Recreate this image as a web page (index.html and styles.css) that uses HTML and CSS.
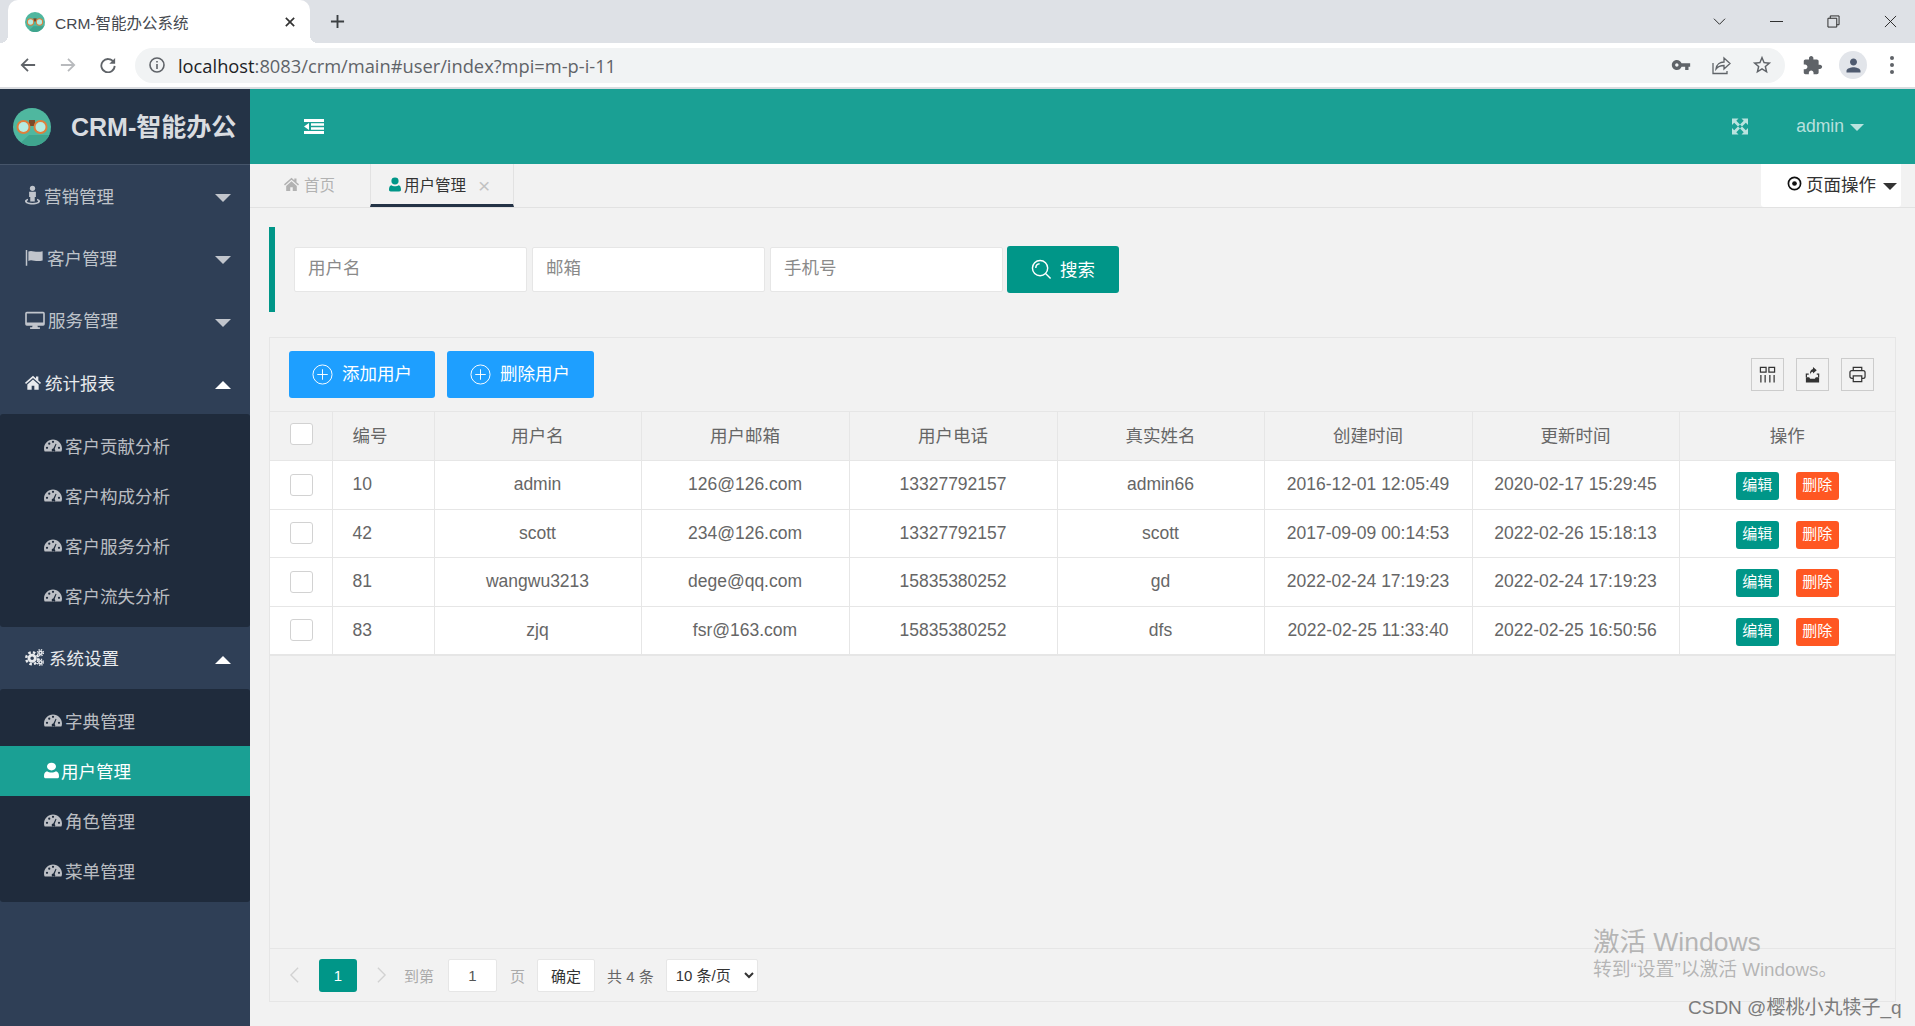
FILE: index.html
```html
<!DOCTYPE html>
<html lang="en">

<head>
    <meta charset="UTF-8">
    <meta name="viewport" content="width=device-width, initial-scale=1">
    <title>CRM-智能办公系统</title>
    <link rel="stylesheet" href="styles.css">
</head>

<body>
    <!-- icon set -->
    <svg class="icon-defs" xmlns="http://www.w3.org/2000/svg">
        <symbol id="i-logo" viewBox="0 0 38 38">
            <ellipse cx="19" cy="19" rx="19" ry="19" fill="#4fb79f"/>
            <path d="M38 19a19 19 0 0 1-30 15.500L16 27h20z" fill="#3fa58e"/>
            <rect x="16" y="12" width="6" height="6" fill="#7a4a2a"/>
            <circle cx="10.500" cy="19" r="7" fill="#e07f3c"/>
            <circle cx="27.500" cy="19" r="7" fill="#e07f3c"/>
            <circle cx="10.500" cy="19" r="5" fill="#b5ece2"/>
            <circle cx="27.500" cy="19" r="5" fill="#b5ece2"/>
        </symbol>
        <symbol id="i-dash" viewBox="0 0 24 18">
            <path fill-rule="evenodd" d="M12 1C5.400 1 0 6.400 0 13c0 1.500.3 3 .9 4h22.200c.6-1 .9-2.500.9-4C24 6.400 18.600 1 12 1zM4 10.500a1.500 1.500 0 1 1 0 3 1.500 1.500 0 0 1 0-3zM7 5a1.500 1.500 0 1 1 0 3 1.500 1.500 0 0 1 0-3zM12 2.500a1.500 1.500 0 1 1 0 3 1.500 1.500 0 0 1 0-3zM20 10.500a1.500 1.500 0 1 1 0 3 1.500 1.500 0 0 1 0-3zM15.500 6.500l1.200.5-2.500 6.500a2.300 2.300 0 1 1-1.800-.6z"/>
        </symbol>
        <symbol id="i-home" viewBox="0 0 24 22">
            <path d="M12 1L0 11.500l1.500 1.800L12 4.200l10.500 9.100 1.500-1.800-4-3.500V2h-3.500v3z"/>
            <path d="M12 6.500L3.500 14v8H10v-6h4v6h6.500v-8z"/>
        </symbol>
        <symbol id="i-user" viewBox="0 0 20 26" preserveAspectRatio="none">
            <path d="M10 1a6 6 0 1 1 0 12 6 6 0 0 1 0-12zM3 25c-2 0-3-1.200-3-3 0-4 1-7 4-7.800 1.500 1.300 3.700 2 6 2s4.500-.7 6-2c3 .8 4 3.800 4 7.800 0 1.800-1 3-3 3z"/>
        </symbol>
        <symbol id="i-street" viewBox="0 0 20 26">
            <circle cx="10" cy="4" r="3.500"/>
            <path d="M5.500 8.500h9v7H13v6H7v-6H5.500z"/>
            <path d="M4 18v2c-1 .4-1.500.8-1.500 1.300C2.500 22.500 6 23.500 10 23.500s7.500-1 7.500-2.200c0-.5-.5-.9-1.500-1.300v-2c2.500.6 4 1.700 4 3.200 0 2.600-4.500 4.300-10 4.300S0 23.800 0 21.200c0-1.500 1.500-2.600 4-3.200z"/>
        </symbol>
        <symbol id="i-flag" viewBox="0 0 24 22">
            <path d="M1 1h2v21H1z"/>
            <path d="M4.500 3c5-2.500 9 2 19-.5V15c-9 2.500-14-2-19 .5z"/>
        </symbol>
        <symbol id="i-desktop" viewBox="0 0 24 22">
            <path fill-rule="evenodd" d="M2 1h20a2 2 0 0 1 2 2v13a2 2 0 0 1-2 2h-7l.5 2H18v2H6v-2h2.500L9 18H2a2 2 0 0 1-2-2V3a2 2 0 0 1 2-2zM2 3v11h20V3z"/>
        </symbol>
        <symbol id="i-cogs" viewBox="0 0 24 24">
            <g fill="none" stroke="currentColor">
                <circle cx="9" cy="13" r="4" stroke-width="3.500"/>
                <circle cx="9" cy="13" r="7.500" stroke-width="3" stroke-dasharray="3.200 2.700"/>
                <circle cx="19.500" cy="6" r="2" stroke-width="2"/>
                <circle cx="19.500" cy="6" r="3.800" stroke-width="1.800" stroke-dasharray="1.600 1.400"/>
                <circle cx="19.500" cy="18" r="2" stroke-width="2"/>
                <circle cx="19.500" cy="18" r="3.800" stroke-width="1.800" stroke-dasharray="1.600 1.400"/>
            </g>
        </symbol>
    </svg>

    <!-- browser window -->
    <div class="tabstrip">
        <div class="browser-tab">
            <svg class="favicon"><use href="#i-logo"/></svg>
            <span class="browser-tab-title">CRM-智能办公系统</span>
            <svg class="browser-tab-close" viewBox="0 0 12 12"><path d="M1 1l10 10M11 1L1 11"/></svg>
        </div>
        <svg class="new-tab" viewBox="0 0 16 16"><path d="M8 1v14M1 8h14"/></svg>
        <div class="window-controls">
            <svg viewBox="0 0 14 14"><path d="M1 4l6 6 6-6"/></svg>
            <svg viewBox="0 0 14 14"><path d="M0 7h14"/></svg>
            <svg viewBox="0 0 14 14"><path d="M1 3.500h9.500V13H1zM3.500 3.500V1H13v9.500h-2.500"/></svg>
            <svg viewBox="0 0 14 14"><path d="M1 1l12 12M13 1L1 13"/></svg>
        </div>
    </div>
    <div class="toolbar">
        <svg class="nav-icon" viewBox="0 0 18 18"><path d="M17 9H2M9 2L2 9l7 7"/></svg>
        <svg class="nav-icon nav-off" viewBox="0 0 18 18"><path d="M1 9h15M9 2l7 7-7 7"/></svg>
        <svg class="nav-icon" viewBox="0 0 18 18"><path d="M15.500 6A7.500 7.500 0 1 0 16.500 10"/><path class="solid" d="M17 1v6.500h-6.500z"/></svg>
        <div class="omnibox">
            <svg class="omni-info" viewBox="0 0 16 16"><circle cx="8" cy="8" r="7"/><path d="M8 7v5M8 4v1.500"/></svg>
            <span class="url"><b>localhost</b>:8083/crm/main#user/index?mpi=m-p-i-11</span>
            <svg class="omni-key" viewBox="0 0 24 24"><path d="M12.650 10C11.830 7.670 9.610 6 7 6c-3.310 0-6 2.690-6 6s2.690 6 6 6c2.610 0 4.830-1.670 5.650-4H17v4h4v-4h2v-4H12.650zM7 14c-1.100 0-2-.9-2-2s.9-2 2-2 2 .9 2 2-.9 2-2 2z"/></svg>
            <svg class="omni-share" viewBox="0 0 20 20"><path d="M2 8v10.500h14V16M5 14c.5-4.500 4-7 8-7V3l6 5.500-6 5.500v-3.500c-3.500 0-6 1-8 3.500z"/></svg>
            <svg class="omni-star" viewBox="0 0 24 24"><path d="M22 9.240l-7.190-.62L12 2 9.190 8.630 2 9.240l5.460 4.730L5.820 21 12 17.270 18.180 21l-1.630-7.030L22 9.240zM12 15.400l-3.760 2.270 1-4.280-3.320-2.880 4.380-.38L12 6.100l1.710 4.040 4.380.38-3.320 2.880 1 4.280L12 15.400z"/></svg>
        </div>
        <svg class="puzzle" viewBox="0 0 24 24"><path d="M20.500 11H19V7c0-1.100-.9-2-2-2h-4V3.500C13 2.120 11.880 1 10.500 1S8 2.120 8 3.500V5H4c-1.100 0-1.990.9-1.990 2v3.800H3.500c1.490 0 2.700 1.210 2.700 2.700s-1.210 2.700-2.700 2.700H2V20c0 1.100.9 2 2 2h3.800v-1.500c0-1.490 1.210-2.700 2.700-2.700 1.490 0 2.700 1.210 2.700 2.700V22H17c1.100 0 2-.9 2-2v-4h1.500c1.380 0 2.500-1.120 2.500-2.500S21.880 11 20.500 11z"/></svg>
        <div class="avatar"><svg viewBox="0 0 24 24"><path d="M12 12c2.210 0 4-1.790 4-4s-1.790-4-4-4-4 1.790-4 4 1.790 4 4 4zm0 2c-2.670 0-8 1.340-8 4v2h16v-2c0-2.660-5.330-4-8-4z"/></svg></div>
        <div class="kebab"><i></i><i></i><i></i></div>
    </div>

    <div class="app">
        <!-- Left side: menu -->
        <aside class="sidebar">
            <div class="logo">
                <svg class="logo-img"><use href="#i-logo"/></svg>
                <span>CRM-智能办公</span>
            </div>
            <div class="menu-item"><svg class="ic ic-street"><use href="#i-street"/></svg><span>营销管理</span><i class="arrow-down"></i></div>
            <div class="menu-item"><svg class="ic ic-flag"><use href="#i-flag"/></svg><span>客户管理</span><i class="arrow-down"></i></div>
            <div class="menu-item"><svg class="ic ic-desktop"><use href="#i-desktop"/></svg><span>服务管理</span><i class="arrow-down"></i></div>
            <div class="menu-item open"><svg class="ic ic-home"><use href="#i-home"/></svg><span>统计报表</span><i class="arrow-up"></i></div>
            <div class="submenu">
                <div class="sub-item"><svg class="ic ic-dash"><use href="#i-dash"/></svg>客户贡献分析</div>
                <div class="sub-item"><svg class="ic ic-dash"><use href="#i-dash"/></svg>客户构成分析</div>
                <div class="sub-item"><svg class="ic ic-dash"><use href="#i-dash"/></svg>客户服务分析</div>
                <div class="sub-item"><svg class="ic ic-dash"><use href="#i-dash"/></svg>客户流失分析</div>
            </div>
            <div class="menu-item open"><svg class="ic ic-cogs"><use href="#i-cogs"/></svg><span>系统设置</span><i class="arrow-up"></i></div>
            <div class="submenu">
                <div class="sub-item"><svg class="ic ic-dash"><use href="#i-dash"/></svg>字典管理</div>
                <div class="sub-item active"><svg class="ic ic-user"><use href="#i-user"/></svg>用户管理</div>
                <div class="sub-item"><svg class="ic ic-dash"><use href="#i-dash"/></svg>角色管理</div>
                <div class="sub-item"><svg class="ic ic-dash"><use href="#i-dash"/></svg>菜单管理</div>
            </div>
        </aside>

        <main class="main">
            <header class="topbar">
                <svg class="indent-icon" viewBox="0 0 20 15"><path d="M0 0h20v3H0zM7 4.200h13v2.600H7zM7 8.200h13v2.600H7zM0 12h20v3H0zM0 7.500L5 4v7z"/></svg>
                <svg class="full-icon" viewBox="0 0 16 16"><path d="M0 0h6.500L4.300 2.200 8 6 6 8 2.200 4.300 0 6.500z"/><path d="M16 0v6.500l-2.200-2.200L10 8 8 6l3.700-3.800L9.500 0zM16 16H9.500l2.200-2.200L8 10l2-2 3.800 3.700 2.200-2.200zM0 16V9.500l2.200 2.200L6 8l2 2-3.700 3.800L6.500 16z"/></svg>
                <span class="admin">admin</span><i class="caret-light"></i>
            </header>

            <nav class="tabbar">
                <div class="page-tab"><svg class="ic ic-tabhome"><use href="#i-home"/></svg>首页</div>
                <div class="page-tab current"><svg class="ic ic-tabuser"><use href="#i-user"/></svg>用户管理<span class="tab-close">×</span></div>
                <div class="page-actions">
                    <svg class="target" viewBox="0 0 16 16"><circle cx="8" cy="8" r="6.500"/><circle class="dot" cx="8" cy="8" r="2.500"/></svg>
                    <span>页面操作</span><i class="caret-dark"></i>
                </div>
            </nav>

            <section class="search-panel">
                <input class="search-input" type="text" placeholder="用户名">
                <input class="search-input" type="text" placeholder="邮箱">
                <input class="search-input" type="text" placeholder="手机号">
                <button class="search-btn">
                    <svg viewBox="0 0 22 22"><circle cx="9.500" cy="9.500" r="8"/><path d="M15.500 15.500l5 5M5 9.500a4.500 4.500 0 0 1 4-4.500"/></svg>
                    <span>搜索</span>
                </button>
            </section>

            <section class="table-box">
                <div class="table-tools">
                    <button class="blue-btn"><svg viewBox="0 0 22 22"><circle cx="11" cy="11" r="10"/><path d="M11 5.500v11M5.500 11h11"/></svg><span>添加用户</span></button>
                    <button class="blue-btn"><svg viewBox="0 0 22 22"><circle cx="11" cy="11" r="10"/><path d="M11 5.500v11M5.500 11h11"/></svg><span>删除用户</span></button>
                    <div class="tool-icons">
                        <div class="tool-icon"><svg viewBox="0 0 18 18"><path d="M1.500 1.500h6v5h-6zM10.500 1.500h6v5h-6zM2 9.500v8M6.500 9.500v8M11.500 9.500v8M16 9.500v8"/></svg></div>
                        <div class="tool-icon"><svg viewBox="0 0 18 18"><path class="solid" d="M2 12h3.500l1 1.500h5l1-1.500H16v5.500H2z"/><path class="solid" d="M9.500 1l4 3.500-4 3.500V6C8 6 7 7 6.500 9 6 6 7 4 9.500 3.300z"/><path d="M2.500 12V8.500h2.500M13.500 8.500h2V12"/></svg></div>
                        <div class="tool-icon"><svg viewBox="0 0 18 18"><path d="M4.500 5V1.500h9V5M4.500 13H3a2 2 0 0 1-2-2V7a2 2 0 0 1 2-2h12a2 2 0 0 1 2 2v4a2 2 0 0 1-2 2h-1.500M4.500 10.500h9v6h-9z"/></svg></div>
                    </div>
                </div>

                <table class="data-table">
                    <colgroup>
                        <col class="col-check"><col class="col-id">
                        <col class="col-a"><col class="col-b"><col class="col-b"><col class="col-a"><col class="col-b"><col class="col-a">
                        <col>
                    </colgroup>
                    <thead>
                        <tr>
                            <th><span class="check head-check"></span></th>
                            <th class="left">编号</th>
                            <th>用户名</th><th>用户邮箱</th><th>用户电话</th><th>真实姓名</th><th>创建时间</th><th>更新时间</th><th>操作</th>
                        </tr>
                    </thead>
                    <tbody>
                        <tr>
                            <td><span class="check"></span></td><td class="left">10</td>
                            <td>admin</td><td>126@126.com</td><td>13327792157</td><td>admin66</td><td>2016-12-01 12:05:49</td><td>2020-02-17 15:29:45</td>
                            <td class="actions"><span class="badge edit">编辑</span><span class="badge del">删除</span></td>
                        </tr>
                        <tr>
                            <td><span class="check"></span></td><td class="left">42</td>
                            <td>scott</td><td>234@126.com</td><td>13327792157</td><td>scott</td><td>2017-09-09 00:14:53</td><td>2022-02-26 15:18:13</td>
                            <td class="actions"><span class="badge edit">编辑</span><span class="badge del">删除</span></td>
                        </tr>
                        <tr>
                            <td><span class="check"></span></td><td class="left">81</td>
                            <td>wangwu3213</td><td>dege@qq.com</td><td>15835380252</td><td>gd</td><td>2022-02-24 17:19:23</td><td>2022-02-24 17:19:23</td>
                            <td class="actions"><span class="badge edit">编辑</span><span class="badge del">删除</span></td>
                        </tr>
                        <tr>
                            <td><span class="check"></span></td><td class="left">83</td>
                            <td>zjq</td><td>fsr@163.com</td><td>15835380252</td><td>dfs</td><td>2022-02-25 11:33:40</td><td>2022-02-25 16:50:56</td>
                            <td class="actions"><span class="badge edit">编辑</span><span class="badge del">删除</span></td>
                        </tr>
                    </tbody>
                </table>

                <div class="pager">
                    <svg class="pager-arrow" viewBox="0 0 12 20"><path d="M10 2L2 10l8 8"/></svg>
                    <span class="page-num">1</span>
                    <svg class="pager-arrow" viewBox="0 0 12 20"><path d="M2 2l8 8-8 8"/></svg>
                    <span class="pager-text goto">到第</span>
                    <input class="pager-input" type="text" value="1">
                    <span class="pager-text page-word">页</span>
                    <button class="pager-ok">确定</button>
                    <span class="pager-total">共 4 条</span>
                    <select class="pager-select"><option>10 条/页</option></select>
                </div>
            </section>
        </main>
    </div>

    <!-- over the page -->
    <div class="activate">
        <div class="activate-title">激活 Windows</div>
        <div class="activate-sub">转到“设置”以激活 Windows。</div>
    </div>
    <div class="csdn-mark">CSDN @樱桃小丸犊子_q</div>
</body>

</html>
```
FILE: styles.css
```css
/* Page */
* {
    box-sizing: border-box;
}

body {
    margin: 0;
    height: 1026px;
    overflow: hidden;
    font-family: "Liberation Sans", "Noto Sans CJK SC", sans-serif;
    font-size: 17.5px;
    color: #666;
    background-color: #f2f2f2;
}

i {
    display: block;
}

.icon-defs {
    display: none;
}

/* Browser tabs */
.tabstrip {
    display: flex;
    align-items: center;
    height: 43px;
    background-color: #dee1e6;
}

.browser-tab {
    position: relative;
    display: flex;
    align-items: center;
    align-self: flex-end;
    width: 302px;
    height: 43px;
    margin-left: 8px;
    padding-left: 17px;
    background-color: white;
    border-radius: 10px 10px 0 0;
}

.browser-tab::before,
.browser-tab::after {
    content: "";
    position: absolute;
    bottom: 0;
    width: 8px;
    height: 8px;
}

.browser-tab::before {
    left: -8px;
    background: radial-gradient(circle at 0 0, transparent 8px, white 8px);
}

.browser-tab::after {
    right: -8px;
    background: radial-gradient(circle at 100% 0, transparent 8px, white 8px);
}

.favicon {
    width: 20px;
    height: 20px;
    flex: none;
}

.browser-tab-title {
    margin-left: 10px;
    font-size: 15.5px;
    color: #45494f;
}

.browser-tab-close {
    width: 10px;
    height: 10px;
    margin-left: auto;
    margin-right: 15px;
    fill: none;
    stroke: #333;
    stroke-width: 2;
}

.new-tab {
    width: 15px;
    height: 15px;
    margin-left: 20px;
    fill: none;
    stroke: #3c4043;
    stroke-width: 2;
}

.window-controls {
    display: flex;
    align-items: center;
    gap: 44px;
    margin-left: auto;
    margin-right: 18px;
}

.window-controls svg {
    width: 13px;
    height: 13px;
    fill: none;
    stroke: #222;
    stroke-width: 1;
    overflow: visible;
}

/* Browser toolbar */
.toolbar {
    display: flex;
    align-items: center;
    height: 46px;
    padding-left: 20px;
    background-color: white;
    border-bottom: 2px solid #dadce0;
}

.nav-icon {
    width: 16px;
    height: 16px;
    margin-right: 24px;
    fill: none;
    stroke: #5f6368;
    stroke-width: 2;
}

.nav-icon.nav-off {
    stroke: #b8babd;
}

.nav-icon .solid {
    fill: #5f6368;
    stroke: none;
}

.omnibox {
    display: flex;
    align-items: center;
    width: 1650px;
    height: 35px;
    margin-left: -5px;
    padding-left: 14px;
    background-color: #f1f3f4;
    border-radius: 18px;
}

.omni-info {
    width: 16px;
    height: 16px;
    fill: none;
    stroke: #5f6368;
    stroke-width: 1.6;
}

.url {
    margin-left: 13px;
    font-family: "Open Sans", "Liberation Sans", sans-serif;
    font-size: 18.3px;
    color: #5f6368;
    white-space: nowrap;
}

.url b {
    font-weight: normal;
    color: #202124;
}

.omni-key {
    width: 20px;
    height: 20px;
    margin-left: auto;
    fill: #5f6368;
}

.omni-share {
    width: 20px;
    height: 20px;
    margin-left: 20px;
    fill: none;
    stroke: #5f6368;
    stroke-width: 1.3;
}

.omni-star {
    width: 22px;
    height: 22px;
    margin-left: 20px;
    margin-right: 12px;
    fill: #5f6368;
}

.puzzle {
    width: 21px;
    height: 21px;
    margin-left: 17px;
    fill: #5f6368;
}

.avatar {
    display: flex;
    align-items: center;
    justify-content: center;
    width: 28px;
    height: 28px;
    margin-left: 16px;
    background-color: #e2e5ea;
    border-radius: 50%;
}

.avatar svg {
    width: 21px;
    height: 21px;
    fill: #4f5b70;
}

.kebab {
    display: flex;
    flex-direction: column;
    gap: 3px;
    margin-left: 23px;
}

.kebab i {
    width: 4px;
    height: 4px;
    background-color: #5f6368;
    border-radius: 50%;
}

/* Layout */
.app {
    display: flex;
    height: 937px;
}

.sidebar {
    width: 250px;
    flex: none;
    background-color: #2f3f56;
    color: rgba(255, 255, 255, 0.7);
}

.main {
    flex: 1;
    display: flex;
    flex-direction: column;
    min-width: 0;
}

/* Left menu */
.logo {
    display: flex;
    align-items: center;
    height: 76px;
    padding-left: 13px;
    background-color: #243346;
    border-bottom: 1px solid #46556a;
    font-size: 25px;
    font-weight: bold;
    color: #d9dce0;
}

.logo span {
    margin-bottom: 3px;
}

.logo-img {
    width: 38px;
    height: 38px;
    margin-right: 20px;
}

.menu-item {
    display: flex;
    align-items: center;
    height: 62.3px;
    padding: 0 19px 2px 25px;
}

.menu-item.open {
    color: #e8eaed;
}

.menu-item span {
    margin-right: auto;
}

.ic {
    fill: currentColor;
    flex: none;
}

.ic-street { width: 15px; height: 20px; margin-right: 4px; }
.ic-flag { width: 18px; height: 17px; margin-right: 4px; }
.ic-desktop { width: 20px; height: 18px; margin-right: 3px; }
.ic-home { width: 16px; height: 15px; margin-right: 4px; }
.ic-cogs { width: 19px; height: 19px; margin-right: 5px; }
.ic-dash { width: 18px; height: 15px; margin-right: 3px; }
.ic-user { width: 15px; height: 17px; margin-right: 2px; }

.arrow-down,
.arrow-up {
    width: 0;
    height: 0;
    margin-top: 6px;
    border-left: 8px solid transparent;
    border-right: 8px solid transparent;
}

.arrow-down {
    border-top: 8px solid rgba(255, 255, 255, 0.7);
}

.arrow-up {
    border-bottom: 8px solid white;
}

.submenu {
    padding: 7px 0 6px;
    background-color: #1f2b3c;
    border-radius: 3px;
}

.sub-item {
    display: flex;
    align-items: center;
    height: 50px;
    padding: 0 0 2px 44px;
}

.sub-item.active {
    background-color: #1aa094;
    color: white;
}

/* Header */
.topbar {
    display: flex;
    align-items: center;
    height: 75px;
    background-color: #1aa094;
    color: rgba(255, 255, 255, 0.7);
}

.indent-icon {
    width: 20px;
    height: 15px;
    margin-left: 54px;
    fill: white;
}

.full-icon {
    width: 16px;
    height: 17px;
    margin-left: auto;
    fill: rgba(255, 255, 255, 0.7);
}

.admin {
    margin-left: 48px;
}

.caret-light {
    width: 0;
    height: 0;
    margin: 2px 51px 0 6px;
    border-left: 7.5px solid transparent;
    border-right: 7.5px solid transparent;
    border-top: 7px solid rgba(255, 255, 255, 0.7);
}

/* Page tabs */
.tabbar {
    display: flex;
    height: 44px;
    border-bottom: 1px solid #e2e2e2;
    font-size: 15.5px;
}

.page-tab {
    display: flex;
    align-items: center;
    height: 43px;
    padding-bottom: 3px;
    color: #b2b2b2;
}

.page-tab:first-child {
    width: 120px;
    padding-left: 34px;
}

.page-tab.current {
    width: 144px;
    padding-left: 18px;
    padding-bottom: 0;
    color: #333;
    border-left: 1px solid #e2e2e2;
    border-right: 1px solid #e2e2e2;
    border-bottom: 3px solid #243346;
}

.ic-tabhome { width: 15px; height: 14px; margin-right: 5px; }
.ic-tabuser { width: 12px; height: 15px; margin-right: 3px; color: #009688; }

.tab-close {
    margin: 3px 0 0 12px;
    font-size: 21px;
    font-weight: normal;
    color: #c2c2c2;
}

.page-actions {
    display: flex;
    align-items: center;
    width: 140px;
    height: 43px;
    margin-left: auto;
    margin-right: 14px;
    padding: 0 0 5px 26px;
    background-color: white;
    border-radius: 0 0 3px 3px;
    font-size: 17.5px;
    color: #333;
}

.target {
    width: 15px;
    height: 15px;
    margin-right: 4px;
    fill: none;
    stroke: #111;
    stroke-width: 1.8;
}

.target .dot {
    fill: #111;
    stroke: none;
}

.caret-dark {
    width: 0;
    height: 0;
    margin: 7px 0 0 7px;
    border-left: 7.5px solid transparent;
    border-right: 7.5px solid transparent;
    border-top: 7px solid #333;
}

/* Search */
.search-panel {
    display: flex;
    align-items: center;
    height: 85px;
    margin: 19px 19px 0;
    padding-left: 19px;
    border-left: 6px solid #009688;
}

.search-input {
    width: 233px;
    height: 45px;
    margin-right: 5px;
    padding: 0 13px 2px;
    background-color: white;
    border: 1px solid #e6e6e6;
    border-radius: 2px;
    font: inherit;
    color: #666;
}

.search-input::placeholder {
    color: #8a8a8a;
}

.search-btn {
    display: flex;
    align-items: center;
    width: 112px;
    height: 47px;
    margin-left: -1px;
    padding: 0 0 0 24px;
    background-color: #009688;
    border: none;
    border-radius: 3px;
    font: inherit;
    color: white;
}

.search-btn svg {
    width: 21px;
    height: 21px;
    margin-right: 8px;
    fill: none;
    stroke: white;
    stroke-width: 1.5;
}

.search-btn span {
    margin-bottom: 3px;
}

/* Table box */
.table-box {
    flex: 1;
    display: flex;
    flex-direction: column;
    margin: 25px 19px 24px;
    border: 1px solid #e6e6e6;
    min-height: 0;
}

.table-tools {
    display: flex;
    align-items: center;
    gap: 12px;
    height: 73px;
    padding: 0 21px 0 19px;
}

.blue-btn {
    display: flex;
    align-items: center;
    width: 147px;
    height: 47px;
    padding: 0 0 0 23px;
    background-color: #1e9fff;
    border: none;
    border-radius: 3px;
    font: inherit;
    color: white;
}

.blue-btn:first-child {
    width: 146px;
}

.blue-btn svg {
    width: 21px;
    height: 21px;
    margin-right: 9px;
    fill: none;
    stroke: white;
    stroke-width: 1;
}

.blue-btn span {
    margin-bottom: 5px;
}

.tool-icons {
    display: flex;
    gap: 12px;
    margin-left: auto;
}

.tool-icon {
    display: flex;
    align-items: center;
    justify-content: center;
    width: 33px;
    height: 33px;
    border: 1px solid #ccc;
}

.tool-icon svg {
    width: 17px;
    height: 17px;
    fill: none;
    stroke: #333;
    stroke-width: 1.3;
}

.tool-icon .solid {
    fill: #333;
    stroke: none;
}

/* Table */
.data-table {
    width: 100%;
    table-layout: fixed;
    border-collapse: collapse;
}

.col-check { width: 62px; }
.col-id { width: 102px; }
.col-a { width: 207px; }
.col-b { width: 208px; }

.data-table th,
.data-table td {
    height: 48.5px;
    padding: 0;
    border: 1px solid #e6e6e6;
    font-weight: normal;
    text-align: center;
    white-space: nowrap;
}

.data-table th {
    height: 49px;
    padding-bottom: 4px;
}

.data-table tr > :first-child {
    padding-left: 2px;
    border-left: none;
}

.data-table tr > :last-child {
    border-right: none;
}

.data-table tbody tr {
    background-color: white;
}

.data-table tbody tr:last-child td {
    border-bottom-width: 2px;
}

.data-table .left {
    position: relative;
    padding-left: 20px;
    text-align: left;
    box-shadow: 2px 0 4px rgba(0, 0, 0, 0.05);
}

.data-table .actions {
    padding-top: 3px;
}

.check {
    display: inline-block;
    width: 23px;
    height: 22px;
    vertical-align: middle;
    background-color: white;
    border: 1px solid #d2d2d2;
    border-radius: 3px;
}

.badge {
    display: inline-block;
    width: 43px;
    height: 28px;
    line-height: 25px;
    border-radius: 3px;
    font-size: 15px;
    color: white;
    vertical-align: middle;
}

.badge.edit {
    background-color: #009688;
}

.badge.del {
    margin-left: 17px;
    background-color: #ff5722;
}

/* Pagination */
.pager {
    display: flex;
    align-items: center;
    height: 53px;
    margin-top: auto;
    padding-left: 19px;
    border-top: 1px solid #e6e6e6;
    font-size: 15px;
}

.pager-arrow {
    width: 11px;
    height: 18px;
    flex: none;
    fill: none;
    stroke: #d2d2d2;
    stroke-width: 1.5;
}

.page-num {
    width: 38px;
    height: 33px;
    margin: 0 19px;
    line-height: 33px;
    text-align: center;
    background-color: #009688;
    border-radius: 3px;
    color: white;
}

.pager-text {
    color: #aaa;
}

.goto {
    margin-left: 17px;
}

.pager-input {
    width: 49px;
    height: 33px;
    margin-left: 14px;
    background-color: white;
    border: 1px solid #e6e6e6;
    border-radius: 2px;
    font: inherit;
    color: #555;
    text-align: center;
}

.page-word {
    margin-left: 13px;
}

.pager-ok {
    width: 58px;
    height: 33px;
    margin-left: 12px;
    padding: 0;
    background-color: white;
    border: 1px solid #e6e6e6;
    border-radius: 2px;
    font: inherit;
    color: #333;
}

.pager-total {
    margin-left: 12px;
    color: #666;
}

.pager-select {
    width: 92px;
    height: 33px;
    margin-left: 12px;
    padding-left: 5px;
    background-color: white;
    border: 1px solid #e6e6e6;
    border-radius: 2px;
    font: inherit;
    color: #333;
}

/* Watermarks */
.activate {
    position: absolute;
    left: 1593px;
    top: 926px;
    color: rgba(120, 120, 120, 0.5);
    pointer-events: none;
}

.activate-title {
    font-size: 26.5px;
    line-height: 32px;
}

.activate-sub {
    font-size: 18.8px;
    line-height: 24px;
}

.csdn-mark {
    position: absolute;
    left: 1688px;
    top: 997px;
    font-size: 19px;
    line-height: 22px;
    color: #7c7c7c;
    white-space: nowrap;
}
```
